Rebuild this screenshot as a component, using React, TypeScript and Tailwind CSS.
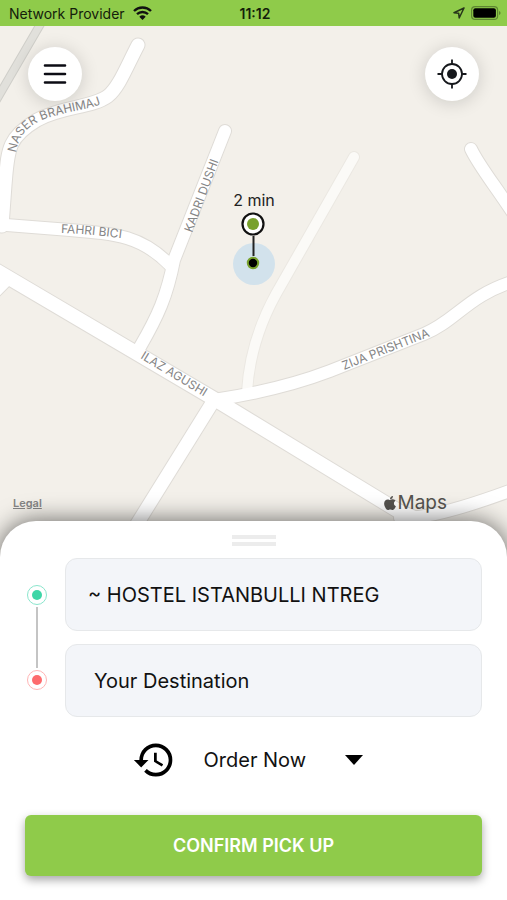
import type { ReactNode } from "react";
import { FaApple } from "react-icons/fa";
import { MdHistory } from "react-icons/md";

type Road = { d: string; width: number; tone?: "minor" | "rail" };

const ROADS: Road[] = [
  { d: "M44 18 L-6 104", width: 7, tone: "rail" },
  { d: "M354 157 L276 294 Q250 341 247 392", width: 10, tone: "minor" },
  { d: "M138 45 C126 68 119 87 108 96 C92 108 62 106 37 120 C7 138 8 150 5 185 L2 226", width: 13 },
  { d: "M-6 224 L70 230 C118 234 142 236 171 266", width: 12 },
  { d: "M225 131 L174 260 C167 296 158 316 140 347", width: 12 },
  { d: "M-8 268 L216 400 L400 512 L424 522", width: 14 },
  { d: "M6 280 L-8 294", width: 13 },
  { d: "M214 400 L132 532", width: 13 },
  { d: "M214 400 C260 393 296 384 330 371 L424 334 C456 321 468 295 515 281", width: 12 },
  { d: "M471 149 C479 166 494 184 515 216", width: 12 },
  { d: "M400 518 Q432 520 515 489", width: 12 },
];

const ROAD_EDGE = { main: "#dfdcd7", minor: "#ebe8e2", rail: "#cfcec9" };
const ROAD_FILL = { main: "#ffffff", minor: "#fbfaf7", rail: "#e1e0db" };

const LABELS = [
  { id: "brahimaj", text: "NASER BRAHIMAJ", d: "M16 153 C20 125 42 119 62 114 C80 109 96 109 116 97" },
  { id: "bici", text: "FAHRI BICI", d: "M61 233 Q96 234 141 241" },
  { id: "dushi", text: "KADRI DUSHI", d: "M192 233 L226 141" },
  { id: "agushi", text: "ILAZ AGUSHI", d: "M140 358 L226 410" },
  { id: "prishtina", text: "ZIJA PRISHTINA", d: "M344 370 L451 328" },
];

function StreetMap() {
  return (
    <svg
      className="absolute inset-0 h-full w-full"
      viewBox="0 26 507 531"
      preserveAspectRatio="xMidYMid slice"
      aria-hidden="true"
    >
      <rect x="-500" y="-500" width="1600" height="1600" fill="#f3f0ea" />
      <g fill="none" strokeLinecap="round" strokeLinejoin="round">
        {ROADS.map((r) => (
          <path key={r.d} d={r.d} stroke={ROAD_EDGE[r.tone ?? "main"]} strokeWidth={r.width + 2} />
        ))}
        {ROADS.map((r) => (
          <path key={r.d} d={r.d} stroke={ROAD_FILL[r.tone ?? "main"]} strokeWidth={r.width} />
        ))}
      </g>
      <g className="fill-[#858585] text-[12px]">
        {LABELS.map((l) => (
          <g key={l.id}>
            <path id={l.id} d={l.d} fill="none" />
            <text>
              <textPath href={`#${l.id}`}>{l.text}</textPath>
            </text>
          </g>
        ))}
      </g>
      <circle cx="254" cy="264" r="21" fill="#d2e2ec" />
      <path d="M253.500 236v20" stroke="#222" strokeWidth="2" />
      <circle cx="253" cy="224" r="10.500" fill="#fff" stroke="#111" strokeWidth="2.200" />
      <circle cx="253" cy="224" r="6" fill="#78a12c" />
      <circle cx="253" cy="263" r="5.200" fill="#000" stroke="#78a12c" strokeWidth="2" />
      <text x="254" y="206" textAnchor="middle" className="fill-[#222] text-[16px]">
        2 min
      </text>
    </svg>
  );
}

function StatusBar() {
  return (
    <header className="grid h-[26px] grid-cols-3 items-center bg-[#8fcb4a] pr-[6px] pl-[9px] text-[14px] text-[#14200a]">
      <div className="flex items-center gap-2 whitespace-nowrap">
        <span>Network Provider</span>
        <svg width="19" height="14" viewBox="0 0 19 14" aria-hidden="true">
          <path d="M1 5a12.200 12.200 0 0 1 17 0M4 8.200a8 8 0 0 1 11 0" fill="none" stroke="#111" strokeWidth="2.400" />
          <path d="M9.500 14 6.300 10.700a4.700 4.700 0 0 1 6.400 0z" fill="#111" />
        </svg>
      </div>
      <span className="text-center font-semibold">11:12</span>
      <div className="flex items-center justify-end gap-[6px]">
        <svg width="12" height="12" viewBox="0 0 12 12" aria-hidden="true">
          <path d="M11 1 1 5.800l4.700.500L6.200 11z" fill="none" stroke="#26351a" strokeWidth="1.500" strokeLinejoin="round" />
        </svg>
        <svg width="30" height="14" viewBox="0 0 30 14" aria-hidden="true">
          <rect x=".6" y=".6" width="26" height="12.800" rx="3.500" fill="none" stroke="#5e8631" strokeWidth="1.200" />
          <rect x="2.300" y="2.300" width="22.600" height="9.400" rx="2" fill="#000" />
          <path d="M28 5v4q1.600-.6 1.600-2T28 5" fill="#5e8631" />
        </svg>
      </div>
    </header>
  );
}

function RoundButton({ label, children }: { label: string; children: ReactNode }) {
  return (
    <button
      type="button"
      aria-label={label}
      className="flex size-[54px] items-center justify-center rounded-full bg-white shadow-[0_2px_18px_rgba(0,0,0,0.16)]"
    >
      {children}
    </button>
  );
}

function StopDot({ tone }: { tone: "green" | "red" }) {
  return (
    <span
      className={`flex size-5 items-center justify-center rounded-full border ${
        tone === "green" ? "border-[#8be6cd]" : "border-[#ffb5b5]"
      }`}
    >
      <span className={`size-[10px] rounded-full ${tone === "green" ? "bg-[#3dd6a7]" : "bg-[#fd6b6d]"}`} />
    </span>
  );
}

const FIELD =
  "h-[73px] w-full rounded-xl border border-[#e6e8ea] bg-[#f3f5f9] text-[20px] text-[#111] outline-none placeholder:text-[#111]";

export default function App() {
  return (
    <div className="flex min-h-screen flex-col bg-white font-['Inter',sans-serif]">
      <StatusBar />

      <main className="relative flex flex-1 flex-col justify-between overflow-hidden">
        <StreetMap />
        <div className="relative flex justify-between px-7 pt-[21px]">
          <RoundButton label="Menu">
            <svg width="24" height="22" viewBox="0 0 24 22" aria-hidden="true">
              <path d="M2 2.500h20M2 11h20M2 19.500h20" stroke="#0c0c14" strokeWidth="2.600" strokeLinecap="round" />
            </svg>
          </RoundButton>
          <RoundButton label="My location">
            <svg width="30" height="30" viewBox="0 0 30 30" aria-hidden="true">
              <circle cx="15" cy="15" r="10" fill="none" stroke="#16181c" strokeWidth="1.800" />
              <circle cx="15" cy="15" r="5" fill="#16181c" />
              <path d="M15 .5v5M15 24.500v5M.5 15h5M24.500 15h5" stroke="#16181c" strokeWidth="1.800" />
            </svg>
          </RoundButton>
        </div>
        <div className="relative flex items-center justify-between pr-[60px] pb-10 pl-[13px]">
          <a href="#legal" className="text-[11px] font-semibold text-[#858585] underline">
            Legal
          </a>
          <span className="flex items-center text-[19px] text-[#55534f]">
            <FaApple className="size-4" aria-hidden="true" />
            Maps
          </span>
        </div>
      </main>

      <section className="relative -mt-9 rounded-t-[36px] bg-white px-[25px] pt-[14px] pb-6 shadow-[0_0_24px_rgba(0,0,0,0.6)]">
        <div className="mx-auto flex w-11 flex-col gap-[3px]">
          <span className="h-1 bg-[#ececec]" />
          <span className="h-1 bg-[#ececec]" />
        </div>

        <form>
          <div className="mt-3 flex gap-[18px] pl-[2px]">
            <div className="flex flex-col items-center justify-between gap-[2px] py-[27px]">
              <StopDot tone="green" />
              <span className="w-[2px] flex-1 bg-[#c4c4c4]" />
              <StopDot tone="red" />
            </div>
            <div className="flex flex-1 flex-col gap-[13px]">
              <input aria-label="Pick up" defaultValue="~ HOSTEL ISTANBULLI NTREG" className={`${FIELD} px-[22px]`} />
              <input aria-label="Destination" placeholder="Your Destination" className={`${FIELD} px-7`} />
            </div>
          </div>

          <div className="mt-[21px] flex items-center justify-center pr-3">
            <MdHistory className="size-11 text-black" aria-hidden="true" />
            <div className="relative ml-7 w-[160px]">
              <select
                aria-label="Pick up time"
                className="w-full appearance-none bg-transparent text-[20px] text-[#111] outline-none"
              >
                <option>Order Now</option>
              </select>
              <svg
                className="pointer-events-none absolute top-1/2 right-0 -translate-y-1/2"
                width="20"
                height="10"
                viewBox="0 0 20 10"
                aria-hidden="true"
              >
                <path d="M1 0h18l-9 10z" fill="#000" />
              </svg>
            </div>
          </div>

          <button
            type="button"
            className="mt-[33px] h-[61px] w-full rounded-[6px] bg-[#8fcb4a] text-[18px] font-semibold text-white shadow-[0_4px_10px_rgba(0,0,0,0.35)]"
          >
            CONFIRM PICK UP
          </button>
        </form>
      </section>
    </div>
  );
}
